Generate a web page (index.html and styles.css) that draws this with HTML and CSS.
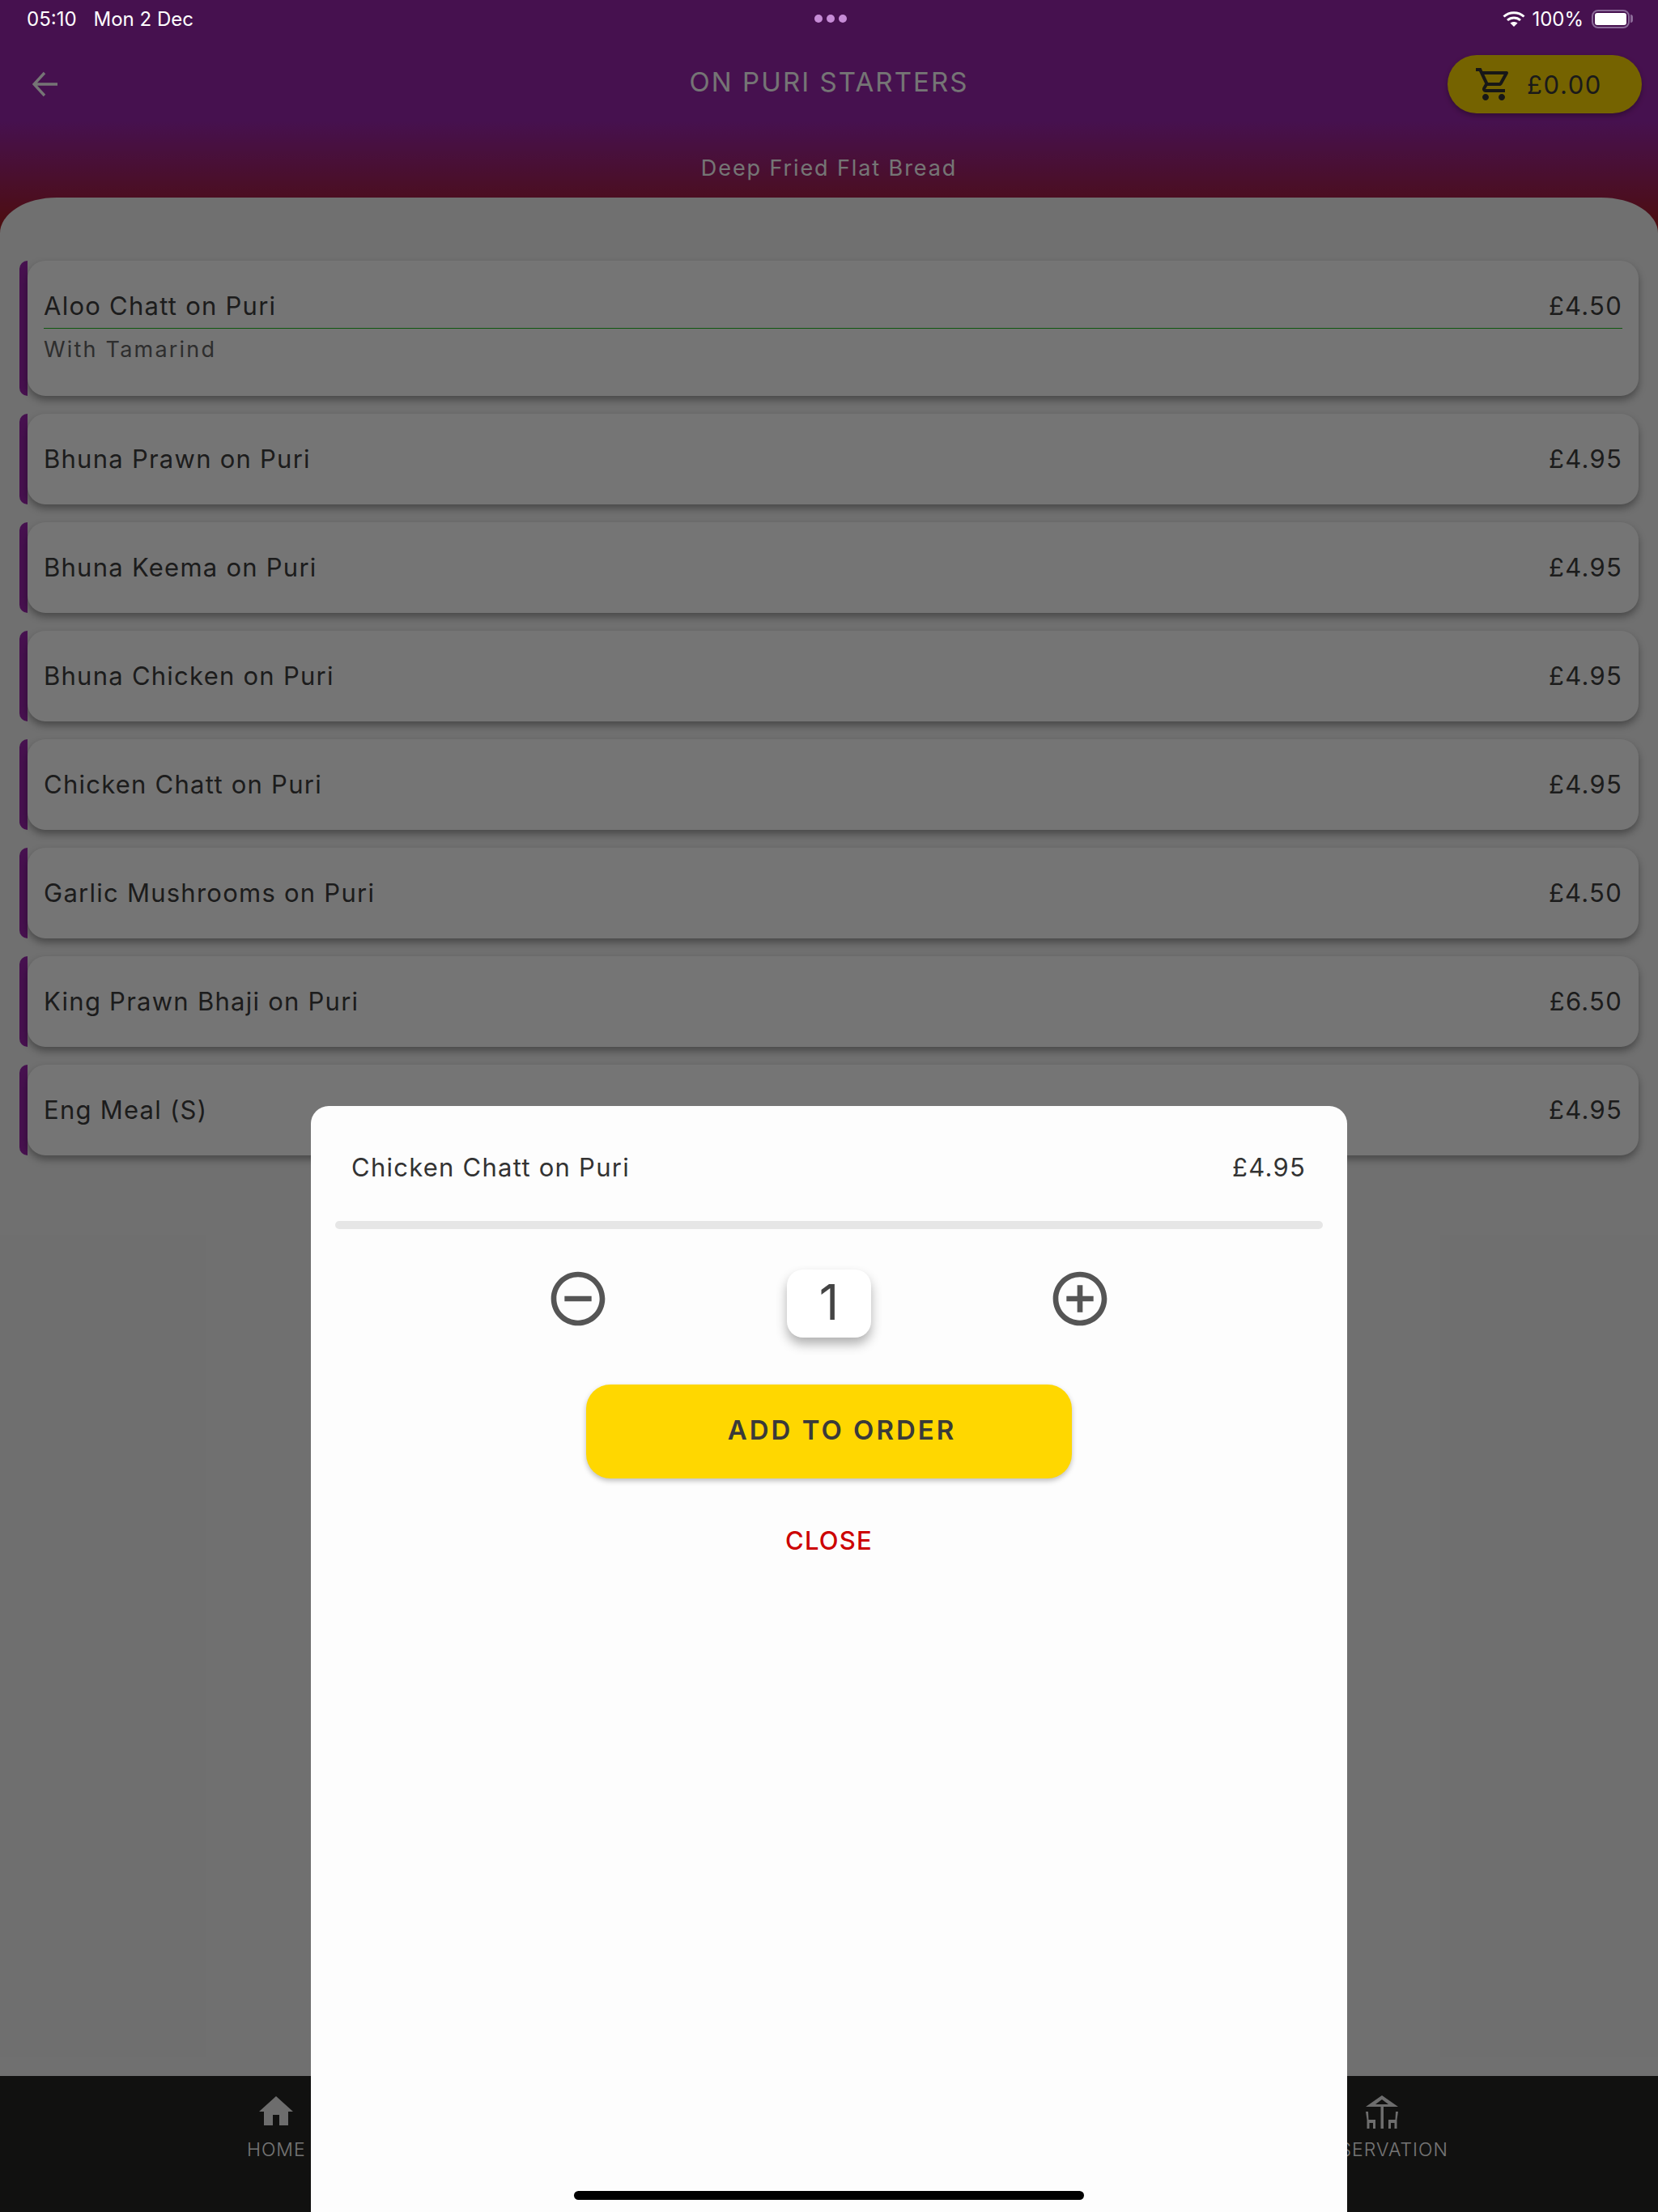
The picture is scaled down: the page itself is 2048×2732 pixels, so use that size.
FILE: index.html
```html
<!DOCTYPE html>
<html lang="en">
<head>
    <meta charset="UTF-8">
    <meta name="viewport" content="width=device-width, initial-scale=1.0">
    <title>On Puri Starters</title>
    <link rel="stylesheet" href="styles.css">
</head>
<body>

    <div class="screen">
        <!-- Header -->
        <div class="header">
            <svg class="back" viewBox="0 0 32 32" fill="none" stroke="#fff" stroke-width="3.4">
                <path d="M31 16H2M15 2 2 16l13 14"/>
            </svg>
            <div class="title">ON PURI STARTERS</div>
            <div class="cart">
                <svg class="cart-icon" viewBox="0 0 24 24"><path d="M15.55 13c.75 0 1.41-.41 1.75-1.03l3.58-6.49A.996.996 0 0 0 20.01 4H5.21l-.94-2H1v2h2l3.6 7.59-1.35 2.44C4.52 15.37 5.48 17 7 17h12v-2H7l1.1-2h7.45zM6.16 6h12.15l-2.76 5H8.53L6.16 6zM7 18c-1.1 0-1.99.9-1.99 2S5.9 22 7 22s2-.9 2-2-.9-2-2-2zm10 0c-1.1 0-1.99.9-1.99 2s.89 2 1.99 2 2-.9 2-2-.9-2-2-2z"/></svg>
                <span>£0.00</span>
            </div>
            <div class="subtitle">Deep Fried Flat Bread</div>
        </div>

        <!-- Menu list -->
        <div class="sheet">
            <div class="item">
                <div class="item-body item-open">
                    <div class="item-row item-head"><span>Aloo Chatt on Puri</span><span>£4.50</span></div>
                    <div class="item-note">With Tamarind</div>
                </div>
            </div>
            <div class="item"><div class="item-body"><div class="item-row"><span>Bhuna Prawn on Puri</span><span>£4.95</span></div></div></div>
            <div class="item"><div class="item-body"><div class="item-row"><span>Bhuna Keema on Puri</span><span>£4.95</span></div></div></div>
            <div class="item"><div class="item-body"><div class="item-row"><span>Bhuna Chicken on Puri</span><span>£4.95</span></div></div></div>
            <div class="item"><div class="item-body"><div class="item-row"><span>Chicken Chatt on Puri</span><span>£4.95</span></div></div></div>
            <div class="item"><div class="item-body"><div class="item-row"><span>Garlic Mushrooms on Puri</span><span>£4.50</span></div></div></div>
            <div class="item"><div class="item-body"><div class="item-row"><span>King Prawn Bhaji on Puri</span><span>£6.50</span></div></div></div>
            <div class="item"><div class="item-body"><div class="item-row"><span>Eng Meal (S)</span><span>£4.95</span></div></div></div>
        </div>

        <!-- Bottom tabs -->
        <div class="tabs">
            <div class="tab">
                <svg class="tab-icon" viewBox="0 -1 42 41"><path d="M17 36V23h8v13h11V19h6L21 0 0 19h6v17z"/></svg>
                <span>HOME</span>
            </div>
            <div class="tab">
                <svg class="tab-icon" viewBox="0 0 42 41"></svg>
                <span>MENU</span>
            </div>
            <div class="tab">
                <svg class="tab-icon" viewBox="-1 0 42 41">
                    <path fill-rule="evenodd" d="M20 0 40 14H0zM20 5l-8 6h16z"/>
                    <path d="M18.5 14h3.500v27h-3.500z"/>
                    <path d="M0 20h3l.5 10H12v11H9v-7H4.500v7h-3V30z"/>
                    <path d="M40 20h-3l-.5 10H28v11h3v-7h4.500v7h3V30z"/>
                </svg>
                <span>RESERVATION</span>
            </div>
        </div>
    </div>

    <div class="scrim"></div>

    <!-- Status bar -->
    <div class="status">
        <div class="status-left"><span>05:10</span><span>Mon 2 Dec</span></div>
        <div class="dots"><i></i><i></i><i></i></div>
        <div class="status-right">
            <svg class="wifi" viewBox="0 0 28 19" fill="none" stroke="#fff" stroke-width="3">
                <path d="M1.500 6.500C8.500 0 19.500 0 26.500 6.500"/>
                <path d="M6 11c4.500-4 11.500-4 16 0"/>
                <path d="M14 19l-4.500-4.500c2.500-2 6.500-2 9 0z" fill="#fff" stroke="none"/>
            </svg>
            <span>100%</span>
            <div class="battery"><div class="battery-fill"></div></div>
        </div>
    </div>

    <!-- Quantity dialog -->
    <div class="modal">
        <div class="modal-row"><span>Chicken Chatt on Puri</span><span>£4.95</span></div>
        <div class="modal-line"></div>
        <div class="qty">
            <svg class="qty-icon" viewBox="0 0 24 24"><path d="M7 11v2h10v-2H7zm5-9C6.480 2 2 6.480 2 12s4.480 10 10 10 10-4.480 10-10S17.520 2 12 2zm0 18c-4.410 0-8-3.590-8-8s3.590-8 8-8 8 3.590 8 8-3.590 8-8 8z"/></svg>
            <div class="qty-box">1</div>
            <svg class="qty-icon" viewBox="0 0 24 24"><path d="M13 7h-2v4H7v2h4v4h2v-4h4v-2h-4V7zm-1-5C6.480 2 2 6.480 2 12s4.480 10 10 10 10-4.480 10-10S17.520 2 12 2zm0 18c-4.410 0-8-3.590-8-8s3.590-8 8-8 8 3.590 8 8-3.590 8-8 8z"/></svg>
        </div>
        <div class="add-btn">ADD TO ORDER</div>
        <div class="close-btn">CLOSE</div>
        <div class="home-bar"></div>
    </div>

</body>
</html>
```

FILE: styles.css
```css
html, body {
    margin: 0;
    height: 2732px;
    overflow: hidden;
}

body {
    font-family: Inter, "Liberation Sans", sans-serif;
    position: relative;
}

.screen {
    display: flex;
    flex-direction: column;
    height: 2732px;
    background: linear-gradient(to bottom, #9a25ac 0, #9a25ac 150px, #a81e1e 285px);
}

/* Header */
.header {
    height: 244px;
    box-sizing: border-box;
    padding: 68px 20px 0;
    display: grid;
    grid-template-columns: 1fr auto 1fr;
    grid-template-rows: 72px auto;
    align-items: center;
    flex-shrink: 0;
}

.back {
    width: 32px;
    height: 32px;
    margin-left: 20px;
}

.title {
    color: #fff;
    font-size: 33px;
    letter-spacing: 2.1px;
    font-weight: 400;
    position: relative;
    top: -3px;
}

.cart {
    justify-self: end;
    width: 240px;
    height: 72px;
    box-sizing: border-box;
    padding-left: 33px;
    display: flex;
    align-items: center;
    gap: 17px;
    background-color: #ffd700;
    border-radius: 36px;
    box-shadow: 0 3px 6px rgba(0, 0, 0, 0.3);
    font-size: 31px;
    letter-spacing: 1.6px;
    color: #3a3a3a;
}

.cart-icon {
    width: 48px;
    height: 48px;
    fill: #333;
}

.subtitle {
    grid-column: 1 / 4;
    text-align: center;
    color: #fff;
    font-size: 27px;
    letter-spacing: 1.9px;
    margin-top: 30px;
}

/* Menu list */
.sheet {
    flex: 1;
    background-color: #f3f3f3;
    border-radius: 70px 70px 0 0 / 44px 44px 0 0;
    padding: 78px 24px 0;
    display: flex;
    flex-direction: column;
    gap: 22px;
}

.item {
    background: linear-gradient(to right, #9a25ac 10px, transparent 10px);
    border-radius: 10px 0 0 10px;
    padding-left: 10px;
}

.item-body {
    background-color: #fff;
    border-radius: 22px;
    height: 112px;
    box-sizing: border-box;
    padding: 0 20px;
    display: flex;
    flex-direction: column;
    justify-content: center;
    box-shadow: 0 5px 10px rgba(0, 0, 0, 0.35);
}

.item-open {
    height: 167px;
    justify-content: flex-start;
    padding-top: 34px;
}

.item-row {
    display: flex;
    justify-content: space-between;
    color: #3d3d3d;
    font-size: 31px;
    letter-spacing: 1.25px;
    line-height: 44px;
}

.item-head {
    height: 49px;
    border-bottom: 1px solid #20c020;
}

.item-note {
    color: #646464;
    font-size: 27px;
    letter-spacing: 2.2px;
    line-height: 40px;
    margin-top: 6px;
}

/* Bottom tabs */
.tabs {
    height: 168px;
    flex-shrink: 0;
    background-color: #252523;
    display: grid;
    grid-template-columns: repeat(3, 1fr);
}

.tab {
    display: flex;
    flex-direction: column;
    align-items: center;
    padding-top: 24px;
    color: #fff;
    font-size: 23px;
    font-weight: 300;
    letter-spacing: 1px;
    line-height: 28px;
    gap: 12px;
}

.tab-icon {
    height: 41px;
    width: 42px;
    fill: #eee;
}

.scrim {
    position: absolute;
    inset: 0;
    background: rgba(0, 0, 0, 0.54);
}

/* Status bar */
.status {
    position: absolute;
    top: 8px;
    left: 33px;
    right: 30px;
    height: 30px;
    display: grid;
    grid-template-columns: 1fr auto 1fr;
    align-items: center;
    color: #fff;
    font-size: 24px;
}

.status-left {
    display: flex;
    gap: 21px;
}

.dots {
    display: flex;
    gap: 5px;
}

.dots i {
    width: 10px;
    height: 10px;
    border-radius: 50%;
    background-color: #c68cd6;
}

.status-right {
    justify-self: end;
    display: flex;
    align-items: center;
    gap: 8px;
}

.wifi {
    width: 28px;
    height: 19px;
}

.battery {
    position: relative;
    width: 47px;
    height: 23px;
    box-sizing: border-box;
    border: 2px solid #8b6a98;
    border-radius: 8px;
    padding: 2px;
    margin-right: 5px;
    margin-left: 2px;
}

.battery::after {
    content: "";
    position: absolute;
    left: 46px;
    top: 4px;
    width: 3px;
    height: 10px;
    border-radius: 0 3px 3px 0;
    background-color: #8b6a98;
}

.battery-fill {
    height: 100%;
    background-color: #fff;
    border-radius: 3px;
}

/* Quantity dialog */
.modal {
    position: absolute;
    left: 384px;
    width: 1280px;
    top: 1366px;
    bottom: 0;
    background-color: #fdfdfd;
    border-radius: 22px 22px 0 0;
    display: flex;
    flex-direction: column;
    align-items: center;
}

.modal-row {
    align-self: stretch;
    display: flex;
    justify-content: space-between;
    padding: 54px 51px 0 50px;
    color: #333;
    font-size: 31px;
    letter-spacing: 1.25px;
    line-height: 44px;
}

.modal-line {
    align-self: stretch;
    height: 10px;
    margin: 44px 30px 0;
    border-radius: 5px;
    background-color: #e6e6e6;
}

.qty {
    width: 700px;
    margin-top: 50px;
    display: flex;
    justify-content: space-between;
    align-items: flex-start;
}

.qty-icon {
    width: 80px;
    height: 80px;
    fill: #555;
    margin-top: -4px;
}

.qty-box {
    width: 104px;
    height: 84px;
    border-radius: 20px;
    background-color: #fff;
    box-shadow: 0 8px 14px rgba(0, 0, 0, 0.3);
    color: #444;
    font-size: 60px;
    font-weight: 400;
    line-height: 80px;
    text-align: center;
}

.add-btn {
    width: 600px;
    height: 116px;
    margin-top: 58px;
    box-sizing: border-box;
    padding-left: 32px;
    border-radius: 30px;
    background-color: #ffd700;
    box-shadow: 0 3px 6px rgba(0, 0, 0, 0.25);
    color: #3a3a3a;
    font-size: 33px;
    font-weight: 600;
    letter-spacing: 3px;
    line-height: 112px;
    text-align: center;
}

.close-btn {
    margin-top: 55px;
    color: #cc0000;
    font-size: 31px;
    font-weight: 500;
    letter-spacing: 1.2px;
    line-height: 44px;
}

.home-bar {
    position: absolute;
    left: 325px;
    bottom: 15px;
    width: 630px;
    height: 11px;
    border-radius: 6px;
    background-color: #000;
}
```
